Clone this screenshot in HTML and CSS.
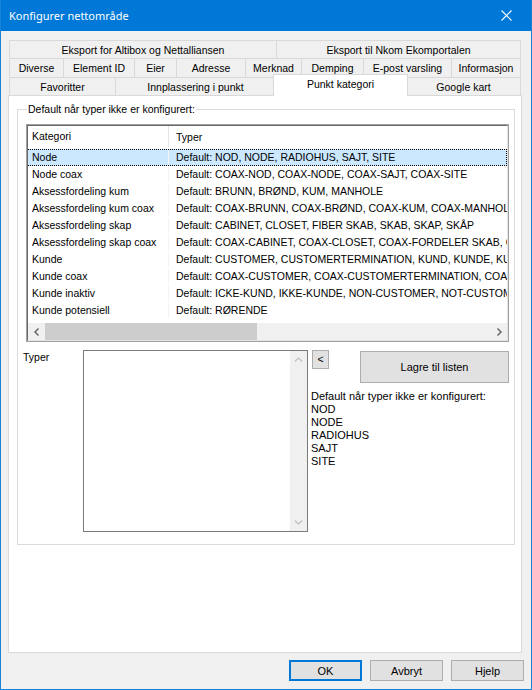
FILE: index.html
```html
<!DOCTYPE html>
<html lang="no">
<head>
<meta charset="utf-8">
<title>Konfigurer nettområde</title>
<link rel="stylesheet" href="styles.css">
</head>
<body>
<div class="window">
  <div class="titlebar">
    <span class="title">Konfigurer nettområde</span>
    <svg class="close" width="11" height="11" viewBox="0 0 11 11"><path d="M0.5 0.5L10.5 10.5M10.5 0.5L0.5 10.5" stroke="#fff" stroke-width="1.1" fill="none"/></svg>
  </div>
  <div class="client">
    <div class="tabs">
      <div class="tabrow row1">
        <div class="tab">Eksport for Altibox og Nettalliansen</div>
        <div class="tab">Eksport til Nkom Ekomportalen</div>
      </div>
      <div class="tabrow row2">
        <div class="tab">Diverse</div>
        <div class="tab">Element ID</div>
        <div class="tab">Eier</div>
        <div class="tab">Adresse</div>
        <div class="tab">Merknad</div>
        <div class="tab">Demping</div>
        <div class="tab">E-post varsling</div>
        <div class="tab">Informasjon</div>
      </div>
      <div class="tabrow row3">
        <div class="tab">Favoritter</div>
        <div class="tab">Innplassering i punkt</div>
        <div class="tab selected">Punkt kategori</div>
        <div class="tab">Google kart</div>
      </div>
    </div>
    <div class="panel">
      <fieldset class="group">
        <legend>Default når typer ikke er konfigurert:</legend>
        <div class="listview">
          <div class="lv-inner">
            <div class="lv-header">
              <div class="c1">Kategori</div>
              <div class="c2">Typer</div>
            </div>
            <div class="lv-body">
              <div class="lv-row selected"><div class="c1">Node</div><div class="c2">Default: NOD, NODE, RADIOHUS, SAJT, SITE</div></div>
              <div class="lv-row"><div class="c1">Node coax</div><div class="c2">Default: COAX-NOD, COAX-NODE, COAX-SAJT, COAX-SITE</div></div>
              <div class="lv-row"><div class="c1">Aksessfordeling kum</div><div class="c2">Default: BRUNN, BRØND, KUM, MANHOLE</div></div>
              <div class="lv-row"><div class="c1">Aksessfordeling kum coax</div><div class="c2">Default: COAX-BRUNN, COAX-BRØND, COAX-KUM, COAX-MANHOLE</div></div>
              <div class="lv-row"><div class="c1">Aksessfordeling skap</div><div class="c2">Default: CABINET, CLOSET, FIBER SKAB, SKAB, SKAP, SKÅP</div></div>
              <div class="lv-row"><div class="c1">Aksessfordeling skap coax</div><div class="c2">Default: COAX-CABINET, COAX-CLOSET, COAX-FORDELER SKAB, COAX-SKAB</div></div>
              <div class="lv-row"><div class="c1">Kunde</div><div class="c2">Default: CUSTOMER, CUSTOMERTERMINATION, KUND, KUNDE, KUNDEBOKS</div></div>
              <div class="lv-row"><div class="c1">Kunde coax</div><div class="c2">Default: COAX-CUSTOMER, COAX-CUSTOMERTERMINATION, COAX-KUND</div></div>
              <div class="lv-row"><div class="c1">Kunde inaktiv</div><div class="c2">Default: ICKE-KUND, IKKE-KUNDE, NON-CUSTOMER, NOT-CUSTOMER</div></div>
              <div class="lv-row"><div class="c1">Kunde potensiell</div><div class="c2">Default: RØRENDE</div></div>
            </div>
            <div class="hscroll">
              <div class="sb-arrow"><svg width="8" height="8" viewBox="0 0 8 8"><path d="M5.5 0.5L2 4L5.5 7.5" stroke="#606060" stroke-width="1.4" fill="none"/></svg></div>
              <div class="sb-track"><div class="sb-thumb"></div></div>
              <div class="sb-arrow"><svg width="8" height="8" viewBox="0 0 8 8"><path d="M2.5 0.5L6 4L2.5 7.5" stroke="#606060" stroke-width="1.4" fill="none"/></svg></div>
            </div>
          </div>
        </div>
        <div class="lower">
          <div class="typer-label">Typer</div>
          <div class="textbox">
            <div class="vscroll">
              <svg width="9" height="8" viewBox="0 0 9 8"><path d="M0.8 5.5L4.5 2L8.2 5.5" stroke="#c4c4c4" stroke-width="1.4" fill="none"/></svg>
              <svg width="9" height="8" viewBox="0 0 9 8"><path d="M0.8 2.5L4.5 6L8.2 2.5" stroke="#c4c4c4" stroke-width="1.4" fill="none"/></svg>
            </div>
          </div>
          <div class="rightcol">
            <div class="btnrow">
              <div class="btn small">&lt;</div>
              <div class="btn lagre">Lagre til listen</div>
            </div>
            <div class="info">Default når typer ikke er konfigurert:<br>NOD<br>NODE<br>RADIOHUS<br>SAJT<br>SITE</div>
          </div>
        </div>
      </fieldset>
    </div>
    <div class="buttons">
      <div class="btn dlg default">OK</div>
      <div class="btn dlg">Avbryt</div>
      <div class="btn dlg">Hjelp</div>
    </div>
  </div>
</div>
</body>
</html>
```

FILE: styles.css
```css
* { box-sizing: border-box; }

body {
  margin: 0;
  font-family: "Liberation Sans", Arial, sans-serif;
  font-size: 10.5px;
  color: #000;
  background: #fff;
}

.window {
  width: 532px;
  height: 690px;
  border: 1px solid #1883d7;
  border-top: none;
  background: #f0f0f0;
  display: flex;
  flex-direction: column;
}

.titlebar {
  height: 31px;
  flex: none;
  background: #0078d7;
  display: flex;
  align-items: center;
  justify-content: space-between;
  padding: 0 19px 0 8px;
}

.title {
  color: #fff;
  font-family: "Noto Sans", "Open Sans", sans-serif;
  font-size: 11px;
}

.close { display: block; }

.client {
  flex: 1;
  padding: 9px 9px 0 7px;
  display: flex;
  flex-direction: column;
}

.tabs {
  margin: 0 1px;
}

.tabrow {
  display: grid;
  border-right: 1px solid #d9d9d9;
}

.row1 { grid-template-columns: 267px 1fr; height: 18px; }
.row2 { grid-template-columns: 54px 71px 42px 69px 56px 62px 88px 1fr; height: 19px; }
.row3 { grid-template-columns: 106px 160px 131px 1fr; height: 18px; }

.tab {
  border-top: 1px solid #d9d9d9;
  border-left: 1px solid #d9d9d9;
  display: flex;
  align-items: center;
  justify-content: center;
  white-space: nowrap;
  background: #f0f0f0;
}

.tab.selected {
  background: #fff;
  border-right: 1px solid #d9d9d9;
  margin: -3px -2px -1px -2px;
  padding-bottom: 4px;
  position: relative;
  z-index: 1;
}

.panel {
  width: 514px;
  height: 558px;
  background: #fff;
  border: 1px solid #d9d9d9;
  padding: 7px 0 0 8px;
}

.group {
  margin: 0;
  width: 498px;
  border: 1px solid #dcdcdc;
  padding: 8px 5px 12px 5px;
}

.group legend {
  padding: 0 1px;
  margin-left: 4px;
  line-height: 13px;
}

.listview {
  margin-left: 3px;
  width: 483px;
  height: 218px;
  border: 1px solid #a0a0a0;
}

.lv-inner {
  height: 100%;
  border-top: 1px solid #696969;
  border-left: 1px solid #696969;
  border-right: 1px solid #e3e3e3;
  border-bottom: 1px solid #e3e3e3;
  background: #fff;
  display: flex;
  flex-direction: column;
}

.lv-header {
  height: 23px;
  flex: none;
  display: flex;
  align-items: center;
  padding-bottom: 2px;
}

.c1 {
  width: 141px;
  flex: none;
  padding-left: 4px;
  white-space: nowrap;
  overflow: hidden;
}

.c2 {
  padding-left: 7px;
  white-space: nowrap;
}

.lv-header .c1 {
  border-right: 1px solid #e5e5e5;
  line-height: 21px;
}

.lv-body {
  height: 174px;
  flex: none;
  overflow: hidden;
}

.lv-row {
  height: 17px;
  line-height: 15px;
  display: flex;
  border: 1px solid transparent;
  margin-left: -1px;
}

.lv-row .c1 {
  border-right: 1px solid #f3f3f3;
}

.lv-row.selected {
  background: #cce8ff;
  border: 1px dotted #000;
}

.hscroll {
  height: 17px;
  flex: none;
  display: flex;
  background: #f0f0f0;
}

.sb-arrow {
  width: 17px;
  flex: none;
  display: flex;
  align-items: center;
  justify-content: center;
}

.sb-arrow svg { display: block; }

.sb-track {
  flex: 1;
  display: flex;
}

.sb-thumb {
  width: 212px;
  background: #cdcdcd;
}

.lower {
  display: flex;
  margin-top: 8px;
}

.typer-label {
  width: 60px;
  flex: none;
  padding-top: 1px;
  line-height: 13px;
}

.textbox {
  width: 225px;
  height: 182px;
  flex: none;
  background: #fff;
  border: 1px solid #7a7a7a;
  display: flex;
  justify-content: flex-end;
}

.vscroll {
  width: 17px;
  background: #f0f0f0;
  display: flex;
  flex-direction: column;
  justify-content: space-between;
  align-items: center;
  padding: 5px 0 5px;
}

.vscroll svg { display: block; }

.rightcol {
  flex: 1;
  margin-left: 3px;
}

.btnrow {
  display: flex;
  align-items: flex-start;
}

.btn {
  background: #e1e1e1;
  border: 1px solid #adadad;
  display: flex;
  align-items: center;
  justify-content: center;
  white-space: nowrap;
}

.btn.small {
  margin-left: 1px;
  width: 17px;
  height: 19px;
  padding-bottom: 1px;
}

.btn.lagre {
  margin-left: auto;
  margin-top: 1px;
  width: 149px;
  height: 32px;
  font-size: 11px;
}

.info {
  margin-top: 7px;
  line-height: 13px;
  font-size: 11px;
}

.buttons {
  display: flex;
  justify-content: flex-end;
  gap: 8px;
  margin-top: 7px;
  margin-right: -2px;
}

.btn.dlg {
  width: 73px;
  height: 21px;
  font-size: 11px;
}

.btn.default {
  border: 2px solid #0078d7;
}
```
